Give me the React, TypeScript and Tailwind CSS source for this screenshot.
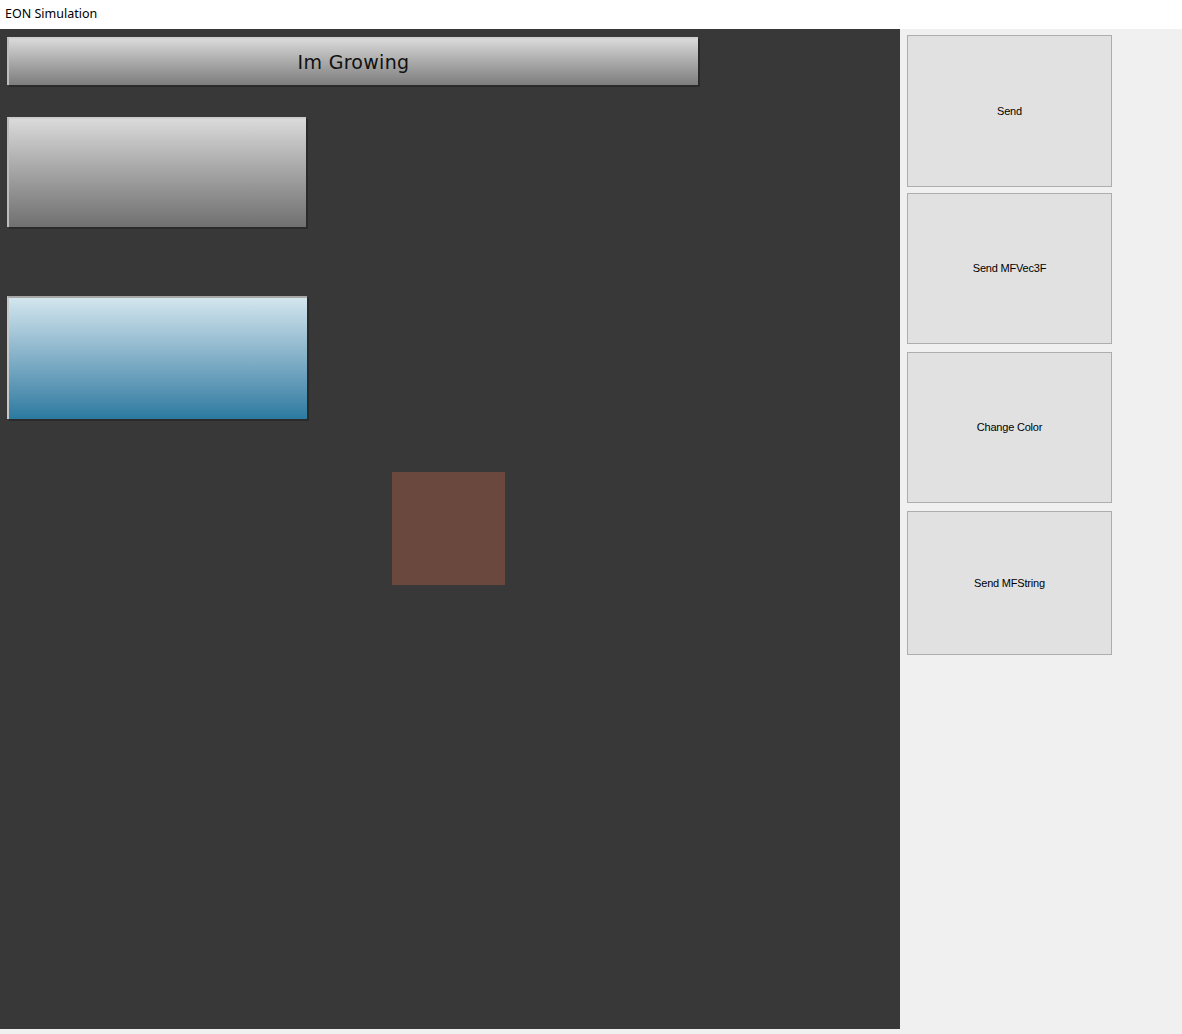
const sideButtons = [
  { label: 'Send', cls: 'mt-[6px] h-[152px]' },
  { label: 'Send MFVec3F', cls: 'mt-[6px] h-[151px]' },
  { label: 'Change Color', cls: 'mt-[8px] h-[151px]' },
  { label: 'Send MFString', cls: 'mt-[8px] h-[144px]' },
];

const App = () => {
  return (
    <div className="w-[1182px] h-[1034px] flex flex-col bg-[#f0f0f0] overflow-hidden">
      {/* Title bar */}
      <div className="h-[29px] bg-white flex items-center px-[5px]">
        <span className="text-[12.5px] text-black font-['Noto_Sans',sans-serif]">EON Simulation</span>
      </div>

      <div className="flex h-[1000px]">
        {/* Simulation canvas */}
        <div className="w-[900px] h-full bg-[#383838] flex flex-col items-start pl-[7px] pt-[8px]">
          <div className="w-[691px] h-[48px] flex items-center justify-center border-t-2 border-l-2 border-t-[#cfcfcf] border-l-[#bdbdbd] shadow-[2px_2px_0_#2a2a2a] bg-gradient-to-b from-[#d9d9d9] to-[#7d7d7d]">
            <span className="text-[19px] text-[#111] tracking-[0.3px] font-['DejaVu_Sans',sans-serif]">Im Growing</span>
          </div>

          <div className="mt-[32px] w-[299px] h-[110px] border-t-2 border-l-2 border-t-[#cdcdcd] border-l-[#bcbcbc] shadow-[2px_2px_0_#2a2a2a] bg-gradient-to-b from-[#dadada] to-[#707070]" />

          <div className="mt-[69px] w-[300px] h-[123px] border-t-2 border-l-2 border-t-[#a8a8a8] border-l-[#c8c8c8] shadow-[2px_2px_0_#2a2a2a] bg-gradient-to-b from-[#d3e6ee] to-[#2a7aa0]" />

          <div className="mt-[53px] ml-[385px] w-[113px] h-[113px] bg-[#6b483d]" />
        </div>

        {/* Control panel */}
        <div className="flex-1 bg-[#f0f0f0] flex flex-col items-start pl-[7px]">
          {sideButtons.map((b) => (
            <button
              key={b.label}
              className={`${b.cls} w-[205px] bg-[#e1e1e1] border border-[#adadad] flex items-center justify-center text-[11px] tracking-[-0.2px] text-black font-['Liberation_Sans',sans-serif]`}
            >
              {b.label}
            </button>
          ))}
        </div>
      </div>
    </div>
  );
};

export default App;
